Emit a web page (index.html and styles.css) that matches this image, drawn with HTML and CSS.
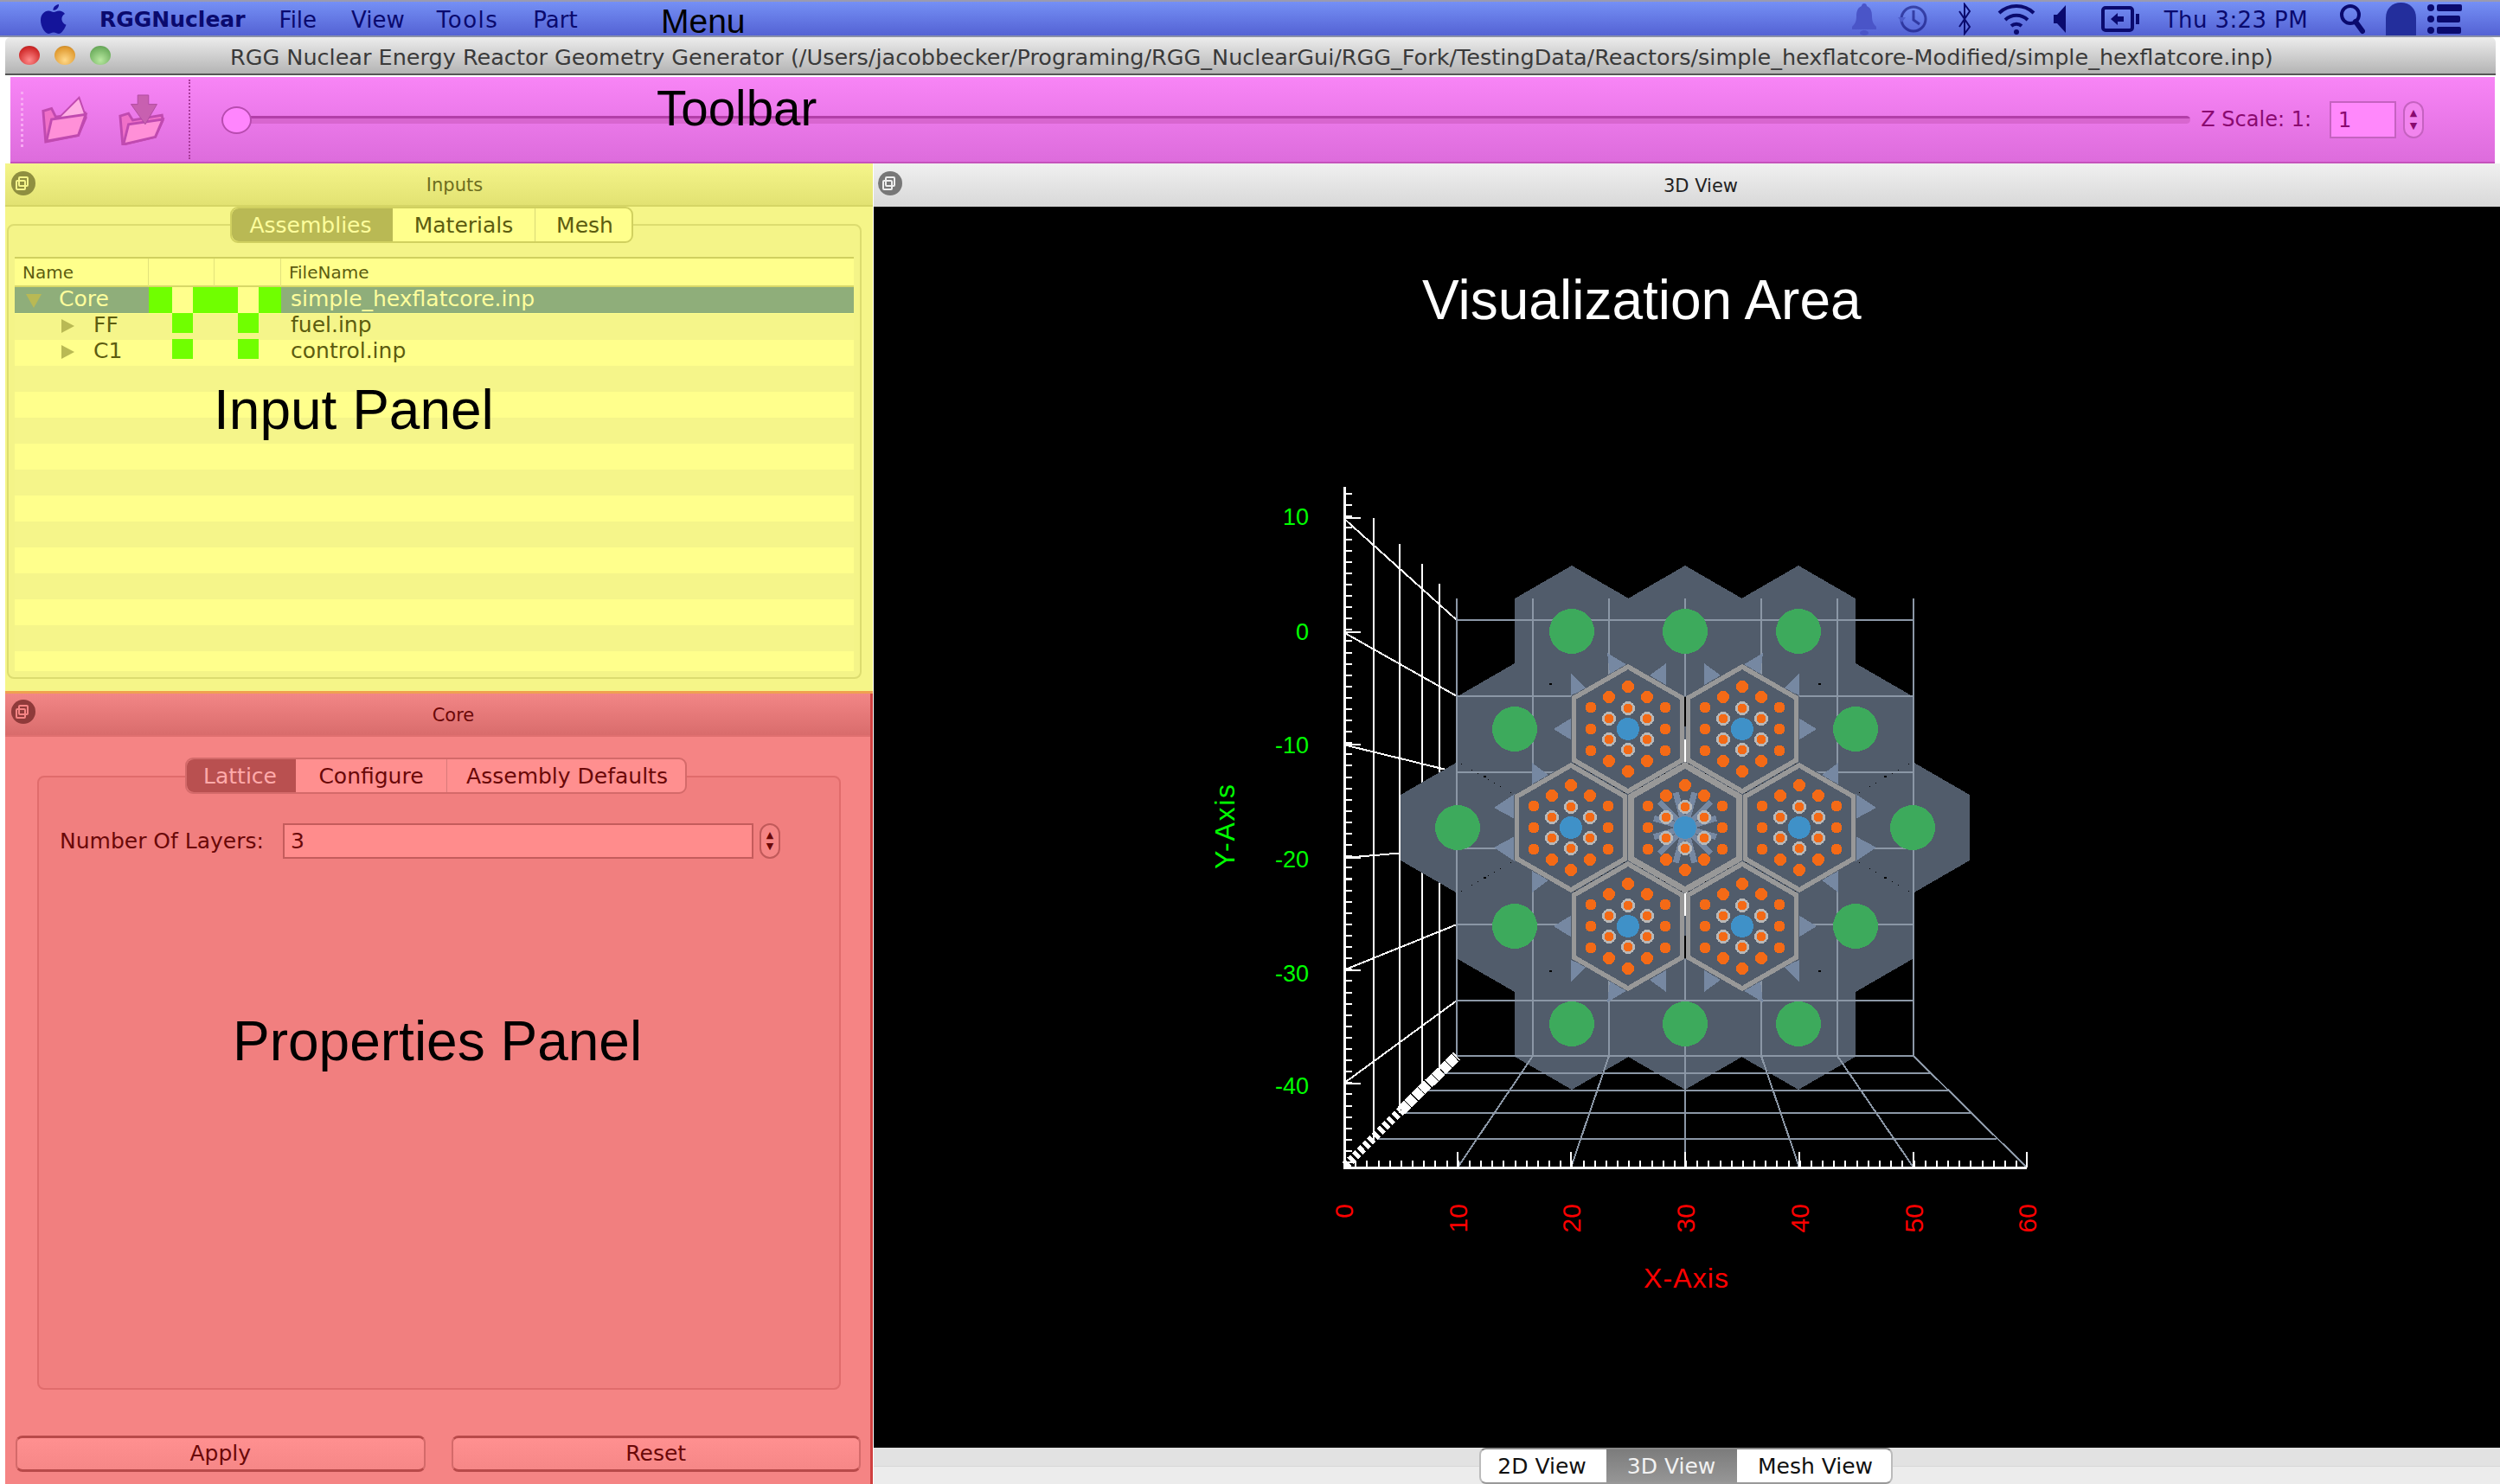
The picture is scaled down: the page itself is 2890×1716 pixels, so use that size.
FILE: index.html
```html
<!DOCTYPE html>
<html lang="en">
<head>
<meta charset="utf-8">
<title>RGG Nuclear</title>
<link rel="stylesheet" href="styles.css">
</head>
<body>
<svg class="defs" width="0" height="0" aria-hidden="true">
  <defs>
    <g id="floatglyph">
      <rect x="9" y="7" width="10" height="10" rx="1"/>
      <rect x="6" y="11" width="10" height="10" rx="1"/>
    </g>
  </defs>
</svg>

<header class="menubar">
  <svg class="apple" viewBox="0 0 32 34"><path d="M22 0c.4 3.500-2.600 7-6.500 7C15 3.500 18.500.4 22 0zM16 9c2 0 3.500-1.500 6.500-1.500 2.500 0 5 1.300 6.500 3.500-5.500 3.200-4.500 10.500 1.500 12.800-1.500 4-5 10.200-8.500 10.200-2.500 0-3.200-1.500-6-1.500s-3.700 1.500-6 1.500C6 34 1 25.500 1 18.500 1 11.500 5.500 7.500 10 7.500c2.700 0 4.300 1.500 6 1.500z"/></svg>
  <span class="menu-app">RGGNuclear</span>
  <span class="menu-item m-file">File</span>
  <span class="menu-item m-view">View</span>
  <span class="menu-item m-tools">Tools</span>
  <span class="menu-item m-part">Part</span>
  <span class="note note-menu">Menu</span>
  <svg class="st st-bell" viewBox="0 0 30 38"><path d="M15 1c2 0 3 1.500 3 3 5 2 6 7 6 12 0 6 2 9 5 12v3H1v-3c3-3 5-6 5-12 0-5 1-10 6-12 0-1.500 1-3 3-3z"/><ellipse cx="15" cy="35" rx="5" ry="3"/></svg>
  <svg class="st st-clock" viewBox="0 0 34 38"><circle class="st-line" cx="18" cy="19" r="14"/><path class="st-line" d="M18 9v11l7 5"/><path d="M0 17h9l-4.500 6z"/></svg>
  <svg class="st st-bt" viewBox="0 0 16 38"><path class="st-line thin" d="M2 10l12 18-6 8V2l6 8L2 28"/></svg>
  <svg class="st st-wifi" viewBox="0 0 44 38"><path class="st-line thick" d="M2 12a29 29 0 0 1 40 0M9 20a19 19 0 0 1 26 0M16 27a9 9 0 0 1 12 0"/><circle cx="22" cy="34" r="3"/></svg>
  <svg class="st st-spk" viewBox="0 0 14 38"><path d="M14 3v32L4 24H0V14h4z"/></svg>
  <svg class="st st-bat" viewBox="0 0 44 38"><rect class="st-line thick" x="2" y="6" width="34" height="26" rx="3"/><path d="M40 13h4v12h-4zM11 19l8-7v4h7v6h-7v4z"/></svg>
  <span class="clock">Thu 3:23 PM</span>
  <svg class="st st-q" viewBox="0 0 29 38"><circle class="st-line thick" cx="12" cy="14" r="10"/><path class="st-line fat" d="M18 22l8 11"/></svg>
  <svg class="st st-user" viewBox="0 0 35 38"><path d="M0 38V18C0 7 7 0 17.500 0S35 7 35 18v20z"/></svg>
  <svg class="st st-list" viewBox="0 0 40 38"><circle cx="4" cy="6" r="4"/><circle cx="4" cy="19" r="4"/><circle cx="4" cy="32" r="4"/><rect x="11" y="2" width="29" height="8" rx="2"/><rect x="11" y="15" width="27" height="8" rx="2"/><rect x="11" y="28" width="28" height="8" rx="2"/></svg>
</header>

<div class="titlebar">
  <span class="light light-red"></span>
  <span class="light light-amber"></span>
  <span class="light light-green"></span>
  <span class="wintitle">RGG Nuclear Energy Reactor Geometry Generator (/Users/jacobbecker/Programing/RGG_NuclearGui/RGG_Fork/TestingData/Reactors/simple_hexflatcore-Modified/simple_hexflatcore.inp)</span>
</div>

<div class="toolbar">
  <span class="grip"></span>
  <svg class="tool tool-open" viewBox="0 0 60 60"><path class="fold-back" d="M3 20l10-3 5 10 35-5 1 6-9 21-39 8z"/><path class="fold-paper" d="M18 32L46 4l7 20-23 14z"/><path class="fold-body" d="M7 56L13 30l41-6-9 25z"/></svg>
  <svg class="tool tool-save" viewBox="0 0 60 60"><path class="fold-back" d="M3 26l10-3 5 8 35-6 1 6-9 20-39 9z"/><path class="fold-body" d="M7 60l6-24 41-6-9 21z"/><path class="fold-arrow" d="M24 1h13v11h10L33 36 16 12h8z"/></svg>
  <span class="tool-sep"></span>
  <div class="slider"><span class="slider-knob"></span></div>
  <span class="zlabel">Z Scale: 1:</span>
  <span class="zfield">1</span>
  <span class="stepper stepper-pink"><i>▲</i><i>▼</i></span>
  <span class="note note-toolbar">Toolbar</span>
</div>

<main class="main">
  <div class="leftcol">
    <section class="dock dock-inputs">
      <div class="docktitle">
        <svg class="floatbtn" viewBox="0 0 28 28"><circle cx="14" cy="14" r="14"/><use href="#floatglyph"/></svg>
        <span>Inputs</span>
      </div>
      <div class="tabs tabs-inputs">
        <span class="tab tab-on t-assem">Assemblies</span>
        <span class="tab t-mat">Materials</span>
        <span class="tab t-mesh">Mesh</span>
      </div>
      <div class="box box-inputs">
        <div class="tree">
          <div class="tree-head">
            <span class="th th-name">Name</span><span class="th th-a"></span><span class="th th-b"></span><span class="th th-file">FileName</span>
          </div>
          <div class="row row-sel">
            <span class="cell-name"><i class="tri tri-down"></i>Core</span>
            <span class="flags"><b></b><b></b></span>
            <span class="cell-file">simple_hexflatcore.inp</span>
          </div>
          <div class="row">
            <span class="cell-name child"><i class="tri tri-right"></i>FF</span>
            <span class="flags"><b></b><b></b></span>
            <span class="cell-file">fuel.inp</span>
          </div>
          <div class="row">
            <span class="cell-name child"><i class="tri tri-right"></i>C1</span>
            <span class="flags"><b></b><b></b></span>
            <span class="cell-file">control.inp</span>
          </div>
        </div>
      </div>
      <span class="note note-input">Input Panel</span>
    </section>

    <section class="dock dock-core">
      <div class="docktitle">
        <svg class="floatbtn" viewBox="0 0 28 28"><circle cx="14" cy="14" r="14"/><use href="#floatglyph"/></svg>
        <span>Core</span>
      </div>
      <div class="tabs tabs-core">
        <span class="tab tab-on t-lat">Lattice</span>
        <span class="tab t-conf">Configure</span>
        <span class="tab t-def">Assembly Defaults</span>
      </div>
      <div class="box box-core">
        <div class="layers">
          <span class="layers-label">Number Of Layers:</span>
          <span class="layers-field">3</span>
          <span class="stepper stepper-red"><i>▲</i><i>▼</i></span>
        </div>
      </div>
      <div class="actions">
        <span class="btn">Apply</span>
        <span class="btn">Reset</span>
      </div>
      <span class="note note-props">Properties Panel</span>
    </section>
  </div>

  <section class="view">
    <div class="docktitle viewtitle">
      <svg class="floatbtn" viewBox="0 0 28 28"><circle cx="14" cy="14" r="14"/><use href="#floatglyph"/></svg>
      <span>3D View</span>
    </div>
    <div class="canvas">
      <svg class="scene" viewBox="1010 239 1880 1435" width="1880" height="1435">
        <defs>
          <polygon id="hex" points="0,-76 65.800,-38 65.800,38 0,76 -65.800,38 -65.800,-38"/>
          <g id="wallgrid">
            <path d="M1684 717H2212M1684 805H2212M1684 893H2212M1684 981H2212M1684 1069H2212M1684 1157H2212M1684 1221H2212"/>
            <path d="M1684 692V1221M1772 692V1221M1860 692V1221M1948 692V1221M2036 692V1221M2124 692V1221M2212 692V1221"/>
            <path d="M1669 1241H2232M1643 1261H2252M1623 1287H2278M1592 1317H2308"/>
            <path d="M1772 1221L1685 1350M1860 1221L1816 1350M1948 1221V1350M2036 1221L2080 1350M2124 1221L2212 1350M2212 1221L2343 1350"/>
          </g>
          <g id="pins">
            <g class="pin-o">
              <circle cx="0" cy="-49" r="7"/><circle cx="22" cy="-37" r="7"/><circle cx="43" cy="-25" r="6.500"/><circle cx="43" cy="0" r="6.500"/><circle cx="43" cy="25" r="6.500"/><circle cx="22" cy="37" r="7"/><circle cx="0" cy="49" r="7"/><circle cx="-22" cy="37" r="7"/><circle cx="-43" cy="25" r="6.500"/><circle cx="-43" cy="0" r="6.500"/><circle cx="-43" cy="-25" r="6.500"/><circle cx="-22" cy="-37" r="7"/>
            </g>
            <g class="pin-g">
              <circle cx="0" cy="-24" r="8"/><circle cx="22" cy="-12" r="8"/><circle cx="22" cy="12" r="8"/><circle cx="0" cy="24" r="8"/><circle cx="-22" cy="12" r="8"/><circle cx="-22" cy="-12" r="8"/>
            </g>
            <g class="pin-o">
              <circle cx="0" cy="-24" r="5.500"/><circle cx="22" cy="-12" r="5.500"/><circle cx="22" cy="12" r="5.500"/><circle cx="0" cy="24" r="5.500"/><circle cx="-22" cy="12" r="5.500"/><circle cx="-22" cy="-12" r="5.500"/>
            </g>
            <circle class="pin-b" r="13"/>
          </g>
          <g id="spikesA" class="spike">
            <polygon points="-24,-88 -1,-74 -21,-64"/>
            <polygon points="44,-76 44,-51 25,-62"/>
            <polygon points="-66,-64 -66,-39 -48,-47"/>
            <polygon points="-86,0 -65,-13 -65,13"/>
          </g>
          <g id="spikesB" class="spike">
            <polygon points="-89,-23 -65,-39 -65,-10"/>
            <polygon points="-89,23 -65,39 -65,10"/>
            <polygon points="-45,-75 -45,-51 -21,-57"/>
            <polygon points="-45,75 -45,51 -21,57"/>
          </g>
          <polygon id="frame" points="0,-72 62.400,-36 62.400,36 0,72 -62.400,36 -62.400,-36"/>
        </defs>

        <g class="wire">
          <use href="#wallgrid"/>
          <path d="M1553 599L1684 717M1553 731L1684 805M1553 861L1684 893M1553 992L1684 981M1553 1122L1684 1069M1553 1253L1684 1157"/>
          <path d="M1588 599V1318M1618 629V1287M1644 652V1262M1664 675V1241"/>
        </g>

        <g class="outer">
          <use href="#hex" x="1817" y="730"/><use href="#hex" x="1948" y="730"/><use href="#hex" x="2079" y="730"/>
          <use href="#hex" x="1751" y="843"/><use href="#hex" x="1882" y="843"/><use href="#hex" x="2014" y="843"/><use href="#hex" x="2145" y="843"/>
          <use href="#hex" x="1685" y="957"/><use href="#hex" x="1816" y="957"/><use href="#hex" x="1948" y="957"/><use href="#hex" x="2080" y="957"/><use href="#hex" x="2211" y="957"/>
          <use href="#hex" x="1751" y="1071"/><use href="#hex" x="1882" y="1071"/><use href="#hex" x="2014" y="1071"/><use href="#hex" x="2145" y="1071"/>
          <use href="#hex" x="1817" y="1184"/><use href="#hex" x="1948" y="1184"/><use href="#hex" x="2079" y="1184"/>
        </g>

        <g class="wire-dim"><use href="#wallgrid"/></g>

        <g class="green">
          <circle cx="1817" cy="730" r="26"/><circle cx="1948" cy="730" r="26"/><circle cx="2079" cy="730" r="26"/>
          <circle cx="1751" cy="843" r="26"/><circle cx="2145" cy="843" r="26"/>
          <circle cx="1685" cy="957" r="26"/><circle cx="2211" cy="957" r="26"/>
          <circle cx="1751" cy="1071" r="26"/><circle cx="2145" cy="1071" r="26"/>
          <circle cx="1817" cy="1184" r="26"/><circle cx="1948" cy="1184" r="26"/><circle cx="2079" cy="1184" r="26"/>
        </g>

        <use href="#spikesA" transform="translate(1882 843)"/>
        <use href="#spikesA" transform="translate(2014 843) scale(-1 1)"/>
        <use href="#spikesA" transform="translate(1882 1071) scale(1 -1)"/>
        <use href="#spikesA" transform="translate(2014 1071) scale(-1 -1)"/>
        <use href="#spikesB" transform="translate(1816 957)"/>
        <use href="#spikesB" transform="translate(2080 957) scale(-1 1)"/>

        <g class="inner">
          <use href="#hex" x="1882" y="843"/><use href="#hex" x="2014" y="843"/>
          <use href="#hex" x="1816" y="957"/><use href="#hex" x="1948" y="957"/><use href="#hex" x="2080" y="957"/>
          <use href="#hex" x="1882" y="1071"/><use href="#hex" x="2014" y="1071"/>
        </g>
        <path class="gap-black" d="M1948 806V840M1948 1082V1108"/>
        <path class="gap-white" d="M1948 855V881M1948 1032V1059"/>
        <g class="frame">
          <use href="#frame" x="1882" y="843"/><use href="#frame" x="2014" y="843"/>
          <use href="#frame" x="1816" y="957"/><use href="#frame" x="2080" y="957"/>
          <use href="#frame" x="1882" y="1071"/><use href="#frame" x="2014" y="1071"/>
        </g>
        <use class="frame-thick" href="#frame" x="1948" y="957"/>

        <path class="rays" d="M1948 957l10.900 -40.600M1948 957l29.700 -29.700M1948 957l36 -10.900M1948 957l36 10.900M1948 957l29.700 29.700M1948 957l10.900 40.600M1948 957l-10.900 40.600M1948 957l-29.700 29.700M1948 957l-36 10.900M1948 957l-36 -10.900M1948 957l-29.700 -29.700M1948 957l-10.900 -40.600"/>

        <use href="#pins" x="1882" y="843"/><use href="#pins" x="2014" y="843"/>
        <use href="#pins" x="1816" y="957"/><use href="#pins" x="1948" y="957"/><use href="#pins" x="2080" y="957"/>
        <use href="#pins" x="1882" y="1071"/><use href="#pins" x="2014" y="1071"/>

        <g class="dots">
          <rect x="1791" y="790" width="3" height="2"/><rect x="2102" y="790" width="3" height="2"/>
          <rect x="1715" y="897" width="3" height="2"/><rect x="2178" y="897" width="3" height="2"/>
          <rect x="1715" y="1014" width="3" height="2"/><rect x="2178" y="1014" width="3" height="2"/>
          <rect x="1791" y="1122" width="3" height="2"/><rect x="2102" y="1122" width="3" height="2"/>
        </g>

        <g class="axes">
          <path class="ax-main" d="M1554 563V1350H2343"/>
          <path class="ax-major" d="M1553 599H1573M1553 731H1573M1553 861H1573M1553 992H1573M1553 1122H1573M1553 1253H1573"/>
          <path class="ax-major" d="M1685 1350V1332M1816 1350V1332M1948 1350V1332M2080 1350V1332M2212 1350V1332M2343 1350V1332"/>
          <line class="tick-y" x1="1558" y1="1345" x2="1558" y2="563"/>
          <line class="tick-x" x1="1553" y1="1346" x2="2343" y2="1346"/>
          <line class="diag-a" x1="1555" y1="1348" x2="1620" y2="1284"/>
          <line class="diag-b" x1="1620" y1="1284" x2="1684" y2="1221"/>
        </g>

        <g class="lab-y">
          <text x="1513" y="607">10</text>
          <text x="1513" y="740">0</text>
          <text x="1513" y="871">-10</text>
          <text x="1513" y="1003">-20</text>
          <text x="1513" y="1135">-30</text>
          <text x="1513" y="1265">-40</text>
        </g>
        <text class="lab-ytitle" transform="translate(1427 1005) rotate(-90)" textLength="98">Y-Axis</text>
        <g class="lab-x">
          <text transform="translate(1564 1392) rotate(-90)">0</text>
          <text transform="translate(1696 1392) rotate(-90)">10</text>
          <text transform="translate(1827 1392) rotate(-90)">20</text>
          <text transform="translate(1959 1392) rotate(-90)">30</text>
          <text transform="translate(2091 1392) rotate(-90)">40</text>
          <text transform="translate(2223 1392) rotate(-90)">50</text>
          <text transform="translate(2354 1392) rotate(-90)">60</text>
        </g>
        <text class="lab-xtitle" x="1900" y="1489" textLength="98">X-Axis</text>
      </svg>
      <span class="note note-vis">Visualization Area</span>
    </div>
    <div class="viewbar">
      <div class="viewtabs">
        <span class="vtab vt-2d">2D View</span>
        <span class="vtab vt-3d">3D View</span>
        <span class="vtab vt-mesh">Mesh View</span>
      </div>
    </div>
  </section>
</main>
</body>
</html>
```
FILE: styles.css
```css
* { box-sizing: border-box; }
html, body { margin: 0; padding: 0; }
body {
  width: 2890px;
  height: 1716px;
  overflow: hidden;
  background: #fff;
  font-family: "DejaVu Sans", sans-serif;
  font-size: 25px;
  position: relative;
}
.defs { position: absolute; }

.note {
  position: absolute;
  font-family: "Liberation Sans", sans-serif;
  color: #000;
  white-space: nowrap;
  line-height: 1;
}
.note-menu { left: 764px; top: 3px; font-size: 39px; }
.note-toolbar { left: 747px; top: 9px; font-size: 56.500px; }
.note-input { left: 241px; top: 253px; font-size: 64px; }
.note-props { left: 263px; top: 370px; font-size: 64px; }
.note-vis { left: 634px; top: 76px; font-size: 64px; color: #fff; }

/* menu bar */
.menubar {
  position: relative;
  height: 43px;
  display: flex;
  align-items: center;
  background: linear-gradient(#7590f5, #5462d4);
  border-top: 2px solid #9a9ab0;
  border-bottom: 2px solid #8a90a8;
  color: #0a0a6e;
  font-size: 26px;
  white-space: nowrap;
}
.menu-item, .menu-app, .clock { padding-top: 2px; }
.apple { width: 32px; height: 34px; margin-left: 46px; fill: #14149a; }
.menu-app { margin-left: 37px; font-weight: 700; font-size: 25px; }
.m-file { margin-left: 39px; }
.m-view { margin-left: 40px; }
.m-tools { margin-left: 37px; letter-spacing: 1.500px; }
.m-part { margin-left: 40px; }
.st { height: 38px; flex: none; fill: #0a0a6e; }
.st-line { fill: none; stroke: #0a0a6e; stroke-width: 3; }
.st-line.thin { stroke-width: 2; }
.st-line.thick { stroke-width: 4; }
.st-line.fat { stroke-width: 6; stroke-linecap: round; }
.st-bell { width: 30px; margin-left: auto; fill: #4a55c8; }
.st-clock { width: 34px; margin-left: 24px; fill: #3e48b8; opacity: .55; }
.st-bt { width: 16px; margin-left: 35px; }
.st-wifi { width: 44px; margin-left: 30px; }
.st-spk { width: 14px; margin-left: 21px; }
.st-bat { width: 44px; margin-left: 41px; }
.clock { margin-left: 29px; font-size: 26px; letter-spacing: .4px; }
.st-q { width: 29px; margin-left: 37px; }
.st-user { width: 35px; margin-left: 24px; fill: #232e9c; }
.st-list { width: 40px; margin-left: 13px; margin-right: 44px; }

/* title bar */
.titlebar {
  height: 44px;
  margin: 0 5px 0 6px;
  display: flex;
  align-items: center;
  background: linear-gradient(#ececec, #b4b4b4);
  border-bottom: 2px solid #555;
  border-radius: 6px 6px 0 0;
}
.light {
  width: 24px;
  height: 22px;
  border-radius: 50%;
  margin-right: 17px;
  flex: none;
}
.light-red { margin-left: 16px; background: radial-gradient(circle at 50% 75%, #ff8a8a, #d02a2a 70%, #902020); }
.light-amber { background: radial-gradient(circle at 50% 75%, #ffd98a, #e09a30 70%, #a06a20); }
.light-green { background: radial-gradient(circle at 50% 75%, #b8e8a0, #70b060 70%, #508a48); }
.wintitle { margin-left: 121px; padding-top: 3px; font-size: 25.500px; color: #3a3a3a; white-space: nowrap; }

/* toolbar */
.toolbar {
  position: relative;
  height: 100px;
  margin: 2px 6px 0 12px;
  display: flex;
  align-items: center;
  background: linear-gradient(#f885f6, #dd6cdc);
  border-bottom: 2px solid #c552bc;
  color: #8a0a70;
}
.grip { width: 4px; height: 64px; margin-left: 12px; border-left: 3px dotted #f8a8f4; flex: none; }
.tool { width: 58px; height: 60px; flex: none; }
.tool-open { margin-left: 19px; }
.tool-save { margin-left: 31px; }
.fold-back { fill: #f070c8; stroke: #c04ab0; stroke-width: 3; }
.fold-paper { fill: #ffb0e4; stroke: #c04ab0; stroke-width: 2; }
.fold-body { fill: #ff90d8; stroke: #c04ab0; stroke-width: 3; }
.fold-arrow { fill: #c860b0; stroke: #b04aa0; stroke-width: 1; }
.tool-sep { width: 0; height: 92px; margin-left: 24px; border-left: 2px dotted #a83a9a; flex: none; }
.slider {
  position: relative;
  flex: 1;
  height: 9px;
  margin: 0 0 0 36px;
  background: linear-gradient(#b23ea8 0 3px, #d866cf 3px);
  border-radius: 5px;
}
.slider-knob {
  position: absolute;
  left: 0;
  top: -11px;
  width: 35px;
  height: 32px;
  border-radius: 50%;
  background: #ff85fd;
  border: 2px solid #b84cb0;
}
.zlabel { margin-left: 12px; font-size: 24px; white-space: nowrap; }
.zfield {
  width: 77px;
  height: 43px;
  margin-left: 21px;
  padding-left: 8px;
  line-height: 40px;
  font-size: 24px;
  background: #ff88fb;
  border: 2px solid #c562c0;
}
.stepper {
  display: flex;
  flex-direction: column;
  justify-content: space-between;
  align-items: center;
  flex: none;
  width: 24px;
  border-radius: 12px;
  padding: 6px 0;
  font-size: 11px;
  line-height: 12px;
}
.stepper i { font-style: normal; }
.stepper-pink { height: 43px; margin-left: 8px; border: 2px solid #c562c0; background: #f285ee; color: #8a0a70; margin-right: 82px; }
.stepper-red { height: 41px; margin-left: 7px; border: 2px solid #c05a5a; background: #f58585; color: #6a0808; }

/* main area */
.main { display: flex; height: 1527px; }
.leftcol { width: 1003px; margin-left: 6px; display: flex; flex-direction: column; flex: none; }
.dock { position: relative; display: flex; flex-direction: column; }
.docktitle {
  position: relative;
  height: 50px;
  flex: none;
  display: flex;
  align-items: center;
  justify-content: center;
  font-size: 21px;
}
.docktitle span { margin-left: 36px; padding-top: 2px; }
.floatbtn { position: absolute; left: 7px; top: 9px; width: 28px; height: 28px; }

.dock-inputs { height: 613px; background: #f5f588; color: #6d6d20; border-bottom: 3px solid #f0a050; }
.dock-inputs .docktitle { background: linear-gradient(#f5f58a, #e2e272); border-bottom: 2px solid #d5d565; }
.dock-inputs .floatbtn { fill: #8f8f40; }
.dock-inputs .floatbtn use { fill: none; stroke: #f5f58a; stroke-width: 2; }

.tabs {
  position: relative;
  z-index: 1;
  display: flex;
  align-self: flex-start;
  font-size: 25px;
  border-radius: 9px;
  flex: none;
}
.tab {
  display: flex;
  align-items: center;
  justify-content: center;
  height: 100%;
  white-space: nowrap;
}
.tab-on { border-radius: 8px 0 0 8px; }
.tab + .tab + .tab { border-left: 1px solid rgba(0,0,0,.15); }
.tabs-inputs { height: 42px; margin: 0 0 -22px 260px; background: #ffff8c; border: 2px solid #d0d060; color: #5c5c10; }
.tabs-inputs .tab-on { background: #b9b954; color: #fdfd9c; }
.t-assem { width: 186px; padding-right: 4px; }
.t-mat { width: 164px; }
.t-mesh { width: 112px; padding-left: 3px; }

.box { border-radius: 8px; flex: none; }
.box-inputs {
  height: 526px;
  margin: 0 13px 0 2px;
  padding: 36px 7px 0;
  background: #f4f488;
  border: 2px solid #dcdc70;
}
.tree {
  height: 479px;
  background: repeating-linear-gradient(#f5f58a 0 30px, #ffff8c 30px 60px) 0 64px;
  border-top: 2px solid #d0d060;
  color: #5c5c10;
  font-size: 25px;
}
.tree-head {
  height: 33px;
  display: grid;
  grid-template-columns: 155px 76px 77px 1fr;
  background: #ffff8c;
  border-bottom: 2px solid #d8d868;
  font-size: 20px;
  align-items: center;
}
.th { height: 100%; padding-left: 9px; line-height: 32px; border-right: 1px solid #e2e27c; }
.th-file { border-right: none; }
.row { height: 30px; display: grid; grid-template-columns: 155px 153px 1fr; line-height: 28px; white-space: nowrap; }
.row-sel { background: #8fae7a; color: #fdfd9c; }
.cell-name { position: relative; padding-left: 51px; }
.cell-name.child { padding-left: 91px; }
.cell-file { padding-left: 11px; }
.tri { position: absolute; width: 0; height: 0; }
.tri-down { left: 13px; top: 8px; border: 9px solid transparent; border-top: 16px solid #b9b954; border-bottom: 0; }
.tri-right { left: 54px; top: 7px; border: 8px solid transparent; border-left: 15px solid #b9b954; border-right: 0; }
.flags { display: flex; gap: 52px; padding-left: 27px; height: 23px; }
.flags b { width: 24px; background: #70ff00; }
.row-sel .flags { height: 30px; background: #70ff00; }
.row-sel .flags b { background: #ffff8c; }

.dock-core { flex: 1; background: #f58484; color: #6a0808; border-right: 3px solid #d04040; }
.dock-core .docktitle { background: linear-gradient(#f28686, #d96c6c); border-bottom: 2px solid #e07070; }
.dock-core .floatbtn { fill: #8f3a3a; top: 7px; }
.dock-core .floatbtn use { fill: none; stroke: #f58484; stroke-width: 2; }
.tabs-core { height: 42px; margin: 24px 0 -21px 208px; background: #ff8f8f; border: 2px solid #d46a6a; }
.tabs-core .tab-on { background: #b95050; color: #ffaaaa; }
.t-lat { width: 126px; padding-right: 3px; }
.t-conf { width: 174px; }
.t-def { width: 276px; padding-left: 2px; }
.box-core {
  height: 710px;
  margin: 0 34px 0 37px;
  padding-top: 53px;
  background: #f17f7f;
  border: 2px solid #e06c6c;
}
.layers { display: flex; align-items: center; height: 41px; font-size: 25px; }
.layers-label { width: 282px; padding-left: 24px; white-space: nowrap; }
.layers-field {
  width: 544px;
  height: 41px;
  padding-left: 7px;
  line-height: 38px;
  font-size: 25px;
  background: #ff8c8c;
  border: 2px solid #c45c5c;
}
.actions { display: flex; gap: 30px; margin: 53px 11px 0 12px; }
.btn {
  flex: 1;
  height: 42px;
  line-height: 36px;
  text-align: center;
  background: linear-gradient(#ff9090, #f68787);
  border: 2px solid #d46a6a;
  border-top: 3px solid #b84a4a;
  border-bottom: 3px solid #b84a4a;
  border-radius: 8px;
}

/* view */
.view { flex: 1; display: flex; flex-direction: column; margin-left: 1px; }
.viewtitle {
  background: linear-gradient(#f0f0f0, #d8d8d8);
  color: #222;
}
.viewtitle span { margin-left: 32px; }
.viewtitle .floatbtn { left: 5px; fill: #777; }
.viewtitle .floatbtn use { fill: none; stroke: #eee; stroke-width: 2; }
.canvas { position: relative; height: 1435px; background: #000; flex: none; overflow: hidden; }
.scene { display: block; shape-rendering: crispEdges; }
.viewbar {
  height: 42px;
  flex: none;
  display: flex;
  justify-content: center;
  background: linear-gradient(#e2e2e2 0 50%, #d6d6d6 50% 52%, #ececec 52%);
}
.viewtabs { display: flex; height: 42px; margin-left: -3px; }
.vtab {
  display: flex;
  align-items: center;
  justify-content: center;
  background: #fff;
  color: #111;
  border-top: 2px solid #888;
  border-bottom: 2px solid #999;
  white-space: nowrap;
  font-size: 25px;
}
.vt-2d { width: 147px; padding-right: 3px; border-left: 2px solid #bbb; border-radius: 8px 0 0 8px; }
.vt-3d { width: 151px; background: linear-gradient(#7c7c7c, #969696); color: #f2f2f2; }
.vt-mesh { width: 180px; padding-left: 4px; border-right: 2px solid #bbb; border-radius: 0 8px 8px 0; }

/* scene contents */
.wire, .wire-dim { fill: none; stroke: #fff; stroke-width: 2; }
.wire-dim { stroke: #8b97a6; }
.outer { fill: #515c6b; }
.inner { fill: #515c6b; }
.green { fill: #3daa5c; }
.spike { fill: #7688a2; }
.frame { fill: none; stroke: #989898; stroke-width: 5.500; }
.frame-thick { fill: none; stroke: #989898; stroke-width: 7; }
.gap-black { fill: none; stroke: #000; stroke-width: 3; }
.gap-white { fill: none; stroke: #fff; stroke-width: 3; }
.rays { fill: none; stroke: #7688a2; stroke-width: 7; }
.pin-o { fill: #f46a16; }
.pin-g { fill: #b8b8b8; }
.pin-b { fill: #3f91c8; }
.dots { fill: #000; }
.axes { fill: none; stroke: #fff; }
.ax-main { stroke-width: 3; }
.ax-major { stroke-width: 2; }
.tick-y { stroke-width: 9; stroke-dasharray: 2 11.100; }
.tick-x { stroke-width: 8; stroke-dasharray: 2 11.170; }
.diag-a { stroke-width: 10; stroke-dasharray: 5 3; }
.diag-b { stroke-width: 12; stroke-dasharray: 10 1; }
.lab-y text, .lab-ytitle { font-family: "Liberation Sans", sans-serif; fill: #00ff00; }
.lab-y text { font-size: 27px; text-anchor: end; }
.lab-ytitle { font-size: 32px; }
.lab-x text, .lab-xtitle { font-family: "Liberation Sans", sans-serif; fill: #ff0000; }
.lab-x text { font-size: 30px; text-anchor: end; }
.lab-xtitle { font-size: 32px; }
```
